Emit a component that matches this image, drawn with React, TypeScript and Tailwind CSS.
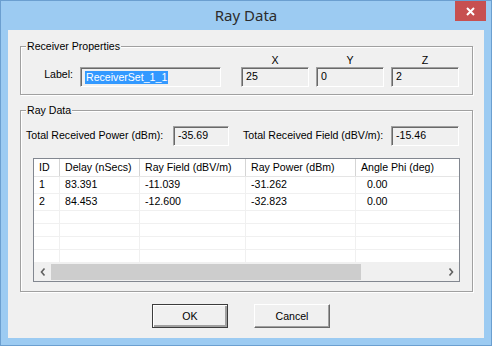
import React from 'react';

// Windows 8 style "Ray Data" dialog

type Col = { name: string; w: string; pad: string };

const cols: Col[] = [
  { name: 'ID', w: 'w-[26px]', pad: 'pl-[5px]' },
  { name: 'Delay (nSecs)', w: 'w-[80px]', pad: 'pl-[5px]' },
  { name: 'Ray Field (dBV/m)', w: 'w-[106px]', pad: 'pl-[5px]' },
  { name: 'Ray Power (dBm)', w: 'w-[110px]', pad: 'pl-[5px]' },
  { name: 'Angle Phi (deg)', w: 'w-[110px]', pad: 'pl-[5px]' },
];

const rays = [
  ['1', '83.391', '-11.039', '-31.262', '\u00a0\u00a00.00'],
  ['2', '84.453', '-12.600', '-32.823', '\u00a0\u00a00.00'],
  ['', '', '', '', ''],
  ['', '', '', '', ''],
  ['', '', '', '', ''],
  ['', '', '', '', ''],
];

function Sunken({ className, children }: { className: string; children?: React.ReactNode }) {
  return (
    <div
      className={`flex h-[20px] shrink-0 items-center border border-t-[#a0a0a0] border-l-[#a0a0a0] border-b-white border-r-white bg-[#f0f0f0] pl-[4px] shadow-[inset_1px_1px_0_#696969] ${className}`}
    >
      {children}
    </div>
  );
}

function Group({ title, className, children }: { title: string; className: string; children: React.ReactNode }) {
  return (
    <div className={`relative ml-[12px] w-[453px] border border-[#a0a0a0] shadow-[inset_1px_1px_0_#ffffff,1px_1px_0_#ffffff] ${className}`}>
      <span className="absolute -top-[8px] left-[5px] bg-[#f0f0f0] px-[1px] leading-[14px]">{title}</span>
      {children}
    </div>
  );
}

function Button({ label, primary }: { label: string; primary?: boolean }) {
  return (
    <button
      className={`flex h-[24px] w-[76px] items-center justify-center bg-[#f0f0f0] leading-none ${
        primary
          ? 'border border-[#3c3c3c] shadow-[inset_1px_1px_0_#ffffff,inset_-2px_-2px_0_#a0a0a0]'
          : 'border border-t-white border-l-white border-b-[#696969] border-r-[#696969] shadow-[inset_-1px_-1px_0_#a0a0a0]'
      }`}
    >
      {label}
    </button>
  );
}

export default function App() {
  return (
    <div className="h-[346px] w-[492px] border border-[#6b9fd0] bg-[#9ccbf2] font-['Liberation_Sans',Arial,sans-serif] text-[10.6px] text-black">
      {/* title bar */}
      <div className="relative flex h-[29px] items-center justify-center">
        <span className="font-['Noto_Sans',sans-serif] text-[15px] text-[#2c2c2c]">Ray Data</span>
        <div className="absolute right-[5px] top-0 flex h-[20px] w-[31px] items-center justify-center bg-[#c75050]">
          <svg width="9" height="9" viewBox="0 0 9 9">
            <path d="M1 1 L8 8 M8 1 L1 8" stroke="#fff" strokeWidth="2" />
          </svg>
        </div>
      </div>

      {/* client area */}
      <div className="ml-[7px] flex h-[308px] w-[476px] flex-col bg-[#f0f0f0]">
        <Group title="Receiver Properties" className="mt-[16px] h-[49px]">
          <div className="flex items-end pt-[7px]">
            <span className="mb-[4px] ml-[17px] mr-[7px] w-[35px] text-right">Label:</span>
            <Sunken className="w-[141px]">
              <span className="bg-[#3399ff] px-[1px] leading-[13px] text-white">ReceiverSet_1_1</span>
            </Sunken>
            {[['X', '25'], ['Y', '0'], ['Z', '2']].map(([k, v], i) => (
              <div key={k} className={`flex w-[68px] flex-col items-center ${i === 0 ? 'ml-[20px]' : 'ml-[7px]'}`}>
                <span className="h-[13px] leading-[12px]">{k}</span>
                <Sunken className="w-[68px]">{v}</Sunken>
              </div>
            ))}
          </div>
        </Group>

        <Group title="Ray Data" className="mt-[15px] h-[182px]">
          <div className="flex items-center pl-[5px] pt-[15px]">
            <span className="w-[147px] shrink-0">Total Received Power (dBm):</span>
            <Sunken className="w-[56px]">-35.69</Sunken>
            <span className="ml-[14px] w-[148px] shrink-0">Total Received Field (dBV/m):</span>
            <Sunken className="w-[68px]">-15.46</Sunken>
          </div>

          {/* list view */}
          <div className="ml-[12px] mt-[12px] flex h-[124px] w-[427px] flex-col overflow-hidden border border-[#828790] bg-white">
            <div className="flex h-[18px] shrink-0 border-b border-[#e5e5e5]">
              {cols.map(c => (
                <div
                  key={c.name}
                  className={`flex shrink-0 items-center border-r border-[#d5d5d5] shadow-[1px_0_0_#ffffff] ${c.w} ${c.pad}`}
                >
                  {c.name}
                </div>
              ))}
            </div>
            <div className="flex flex-1 flex-col">
              {rays.map((r, i) => (
                <div key={i} className="flex flex-1 border-b border-[#f0f0f0]">
                  {r.map((v, j) => (
                    <div key={j} className={`flex shrink-0 items-center border-r border-[#f0f0f0] ${cols[j].w} ${cols[j].pad}`}>
                      {v}
                    </div>
                  ))}
                </div>
              ))}
            </div>
            {/* horizontal scrollbar */}
            <div className="flex h-[18px] shrink-0 items-center bg-[#f0f0f0]">
              <div className="flex w-[17px] justify-center">
                <svg width="6" height="8" viewBox="0 0 6 8">
                  <path d="M4.5 0.5 L1.5 4 L4.5 7.5" stroke="#606060" strokeWidth="1.6" fill="none" />
                </svg>
              </div>
              <div className="h-[16px] w-[310px] bg-[#cdcdcd]" />
              <div className="flex-1" />
              <div className="flex w-[17px] justify-center">
                <svg width="6" height="8" viewBox="0 0 6 8">
                  <path d="M1.5 0.5 L4.5 4 L1.5 7.5" stroke="#606060" strokeWidth="1.6" fill="none" />
                </svg>
              </div>
            </div>
          </div>
        </Group>

        <div className="ml-[144px] mt-[12px] flex gap-[26px]">
          <Button label="OK" primary />
          <Button label="Cancel" />
        </div>
      </div>
    </div>
  );
}
